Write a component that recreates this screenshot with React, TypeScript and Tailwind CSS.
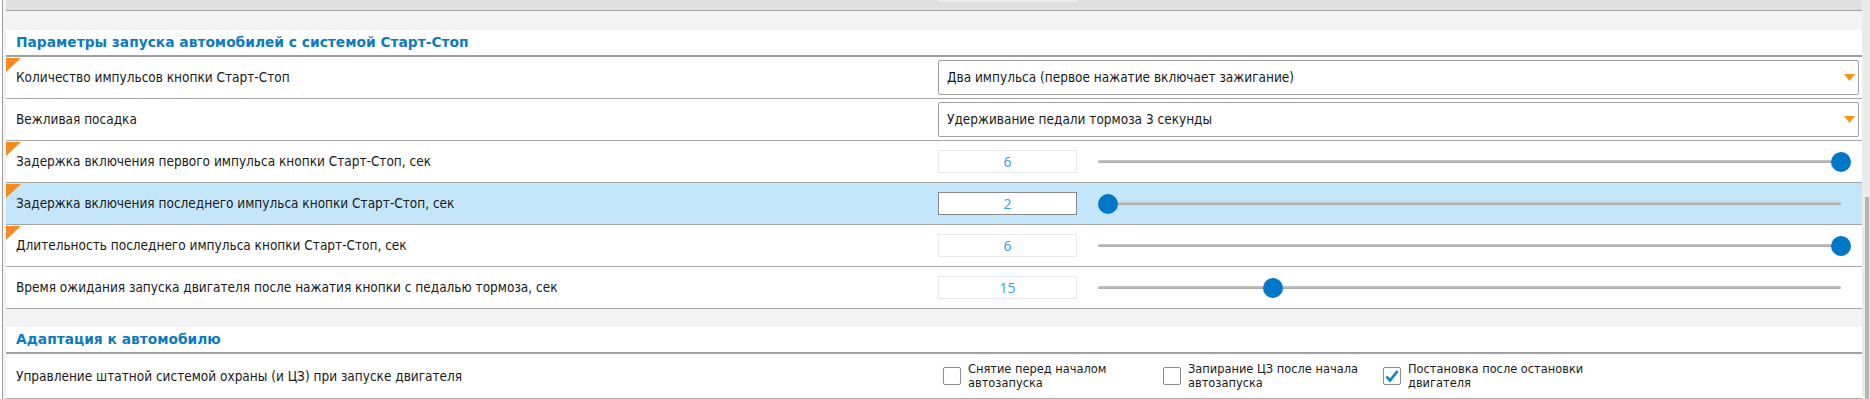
import React from "react";

const Corner = () => (
  <svg className="absolute left-0 top-[1px]" width="15" height="14" viewBox="0 0 15 14">
    <polygon points="0,0 15,0 0,14" fill="#f58a1f" />
  </svg>
);

const Arrow = () => (
  <svg width="11" height="7" viewBox="0 0 11 7">
    <polygon points="0,0 11,0 5.5,7" fill="#f7941d" />
  </svg>
);

type SelRow = { kind: "select"; label: string; value: string; corner: boolean };
type SldRow = { kind: "slider"; label: string; value: string; frac: number; corner: boolean; active?: boolean };

const rows: (SelRow | SldRow)[] = [
  { kind: "select", label: "Количество импульсов кнопки Старт-Стоп", value: "Два импульса (первое нажатие включает зажигание)", corner: true },
  { kind: "select", label: "Вежливая посадка", value: "Удерживание педали тормоза 3 секунды", corner: false },
  { kind: "slider", label: "Задержка включения первого импульса кнопки Старт-Стоп, сек", value: "6", frac: 1, corner: true },
  { kind: "slider", label: "Задержка включения последнего импульса кнопки Старт-Стоп, сек", value: "2", frac: 0, corner: true, active: true },
  { kind: "slider", label: "Длительность последнего импульса кнопки Старт-Стоп, сек", value: "6", frac: 1, corner: true },
  { kind: "slider", label: "Время ожидания запуска двигателя после нажатия кнопки с педалью тормоза, сек", value: "15", frac: 0.225, corner: false },
];

const Slider = ({ frac }: { frac: number }) => (
  <div className="relative ml-[21px] w-[753px] h-[20px]">
    <div className="absolute left-0 w-[743px] top-[8px] h-[3px] rounded-full bg-gradient-to-b from-[#c8c8c8] to-[#a8a8a8]" />
    <div
      className="absolute top-0 w-[20px] h-[20px] rounded-full bg-[#0077c8]"
      style={{ left: `${Math.round(frac * 733)}px` }}
    />
  </div>
);

const Check = ({ checked, text1, text2 }: { checked: boolean; text1: string; text2: string }) => (
  <div className="w-[220px] flex items-center gap-[7px] shrink-0">
    <div className="w-[18px] h-[18px] border border-[#8c8c8c] rounded-[2px] bg-white flex items-center justify-center shrink-0">
      {checked && (
        <svg width="16" height="16" viewBox="0 0 16 16">
          <path d="M2.5 8.5 L6 12.5 L13.5 3" fill="none" stroke="#0b7dc8" strokeWidth="2.6" />
        </svg>
      )}
    </div>
    <div className="text-[12.7px] leading-[14px] text-[#1a1a1a]">
      <div>{text1}</div>
      <div>{text2}</div>
    </div>
  </div>
);

export default function App() {
  return (
    <div className="w-[1870px] h-[399px] flex bg-white overflow-hidden font-[family-name:'DejaVu_Sans_Condensed','DejaVu_Sans',sans-serif] text-[13.5px] text-[#1a1a1a]">
      <div className="w-[2px] bg-white" />
      <div className="w-px bg-[#a0a0a0]" />
      <div className="w-[3px] bg-[#f3f3f3]" />
      <div className="w-[1856px] flex flex-col">
        <div className="h-[11px] bg-[#e0e0e0] border-b border-[#a3a3a3]">
          <div className="ml-[932px] w-[139px] h-[2px] bg-[#ededed]" />
        </div>
        <div className="h-[19px] bg-[#f3f3f3]" />
        <div className="h-[27px] bg-white border-b-2 border-[#a0a0a0] flex items-center pl-[10px] font-bold text-[13.8px] text-[#0c7bc0] font-[family-name:'DejaVu_Sans',sans-serif]">
          Параметры запуска автомобилей с системой Старт-Стоп
        </div>
        {rows.map((r, i) => (
          <div
            key={i}
            className={`relative h-[42px] shrink-0 flex items-center border-b border-[#a6a6a6] ${
              r.kind === "slider" && r.active ? "bg-[#c4e6fa]" : "bg-white"
            }`}
          >
            {r.corner && <Corner />}
            <div className="w-[932px] pl-[10px] shrink-0">{r.label}</div>
            {r.kind === "select" ? (
              <div className="w-[921px] h-[35px] border border-[#a0a0a0] rounded-[2px] bg-white flex items-center justify-between pl-[8px] pr-[3px]">
                <span>{r.value}</span>
                <Arrow />
              </div>
            ) : (
              <div className="flex items-center">
                <div
                  className={`w-[139px] h-[23px] flex items-center justify-center bg-white font-['Open_Sans',sans-serif] text-[14px] text-[#2aa3e2] border ${
                    r.active ? "border-[#8a8a8a]" : "border-[#e8e8e8]"
                  }`}
                >
                  {r.value}
                </div>
                <Slider frac={r.frac} />
              </div>
            )}
          </div>
        ))}
        <div className="h-[18px] bg-[#f3f3f3] shrink-0" />
        <div className="h-[27px] shrink-0 bg-white border-b-2 border-[#a0a0a0] flex items-center pl-[10px] font-bold text-[13.8px] text-[#0c7bc0] font-[family-name:'DejaVu_Sans',sans-serif]">
          Адаптация к автомобилю
        </div>
        <div className="h-[45px] shrink-0 flex items-center border-b border-[#a6a6a6] bg-white">
          <div className="w-[932px] pl-[10px] shrink-0">Управление штатной системой охраны (и ЦЗ) при запуске двигателя</div>
          <div className="flex items-center pl-[5px]">
            <Check checked={false} text1="Снятие перед началом" text2="автозапуска" />
            <Check checked={false} text1="Запирание ЦЗ после начала" text2="автозапуска" />
            <Check checked={true} text1="Постановка после остановки" text2="двигателя" />
          </div>
        </div>
      </div>
      <div className="w-[8px] bg-[#ebebeb] flex flex-col">
        <div className="h-[197px]" />
        <div className="ml-[3px] w-[4px] flex-1 bg-[#b5b5b5]" />
      </div>
    </div>
  );
}
